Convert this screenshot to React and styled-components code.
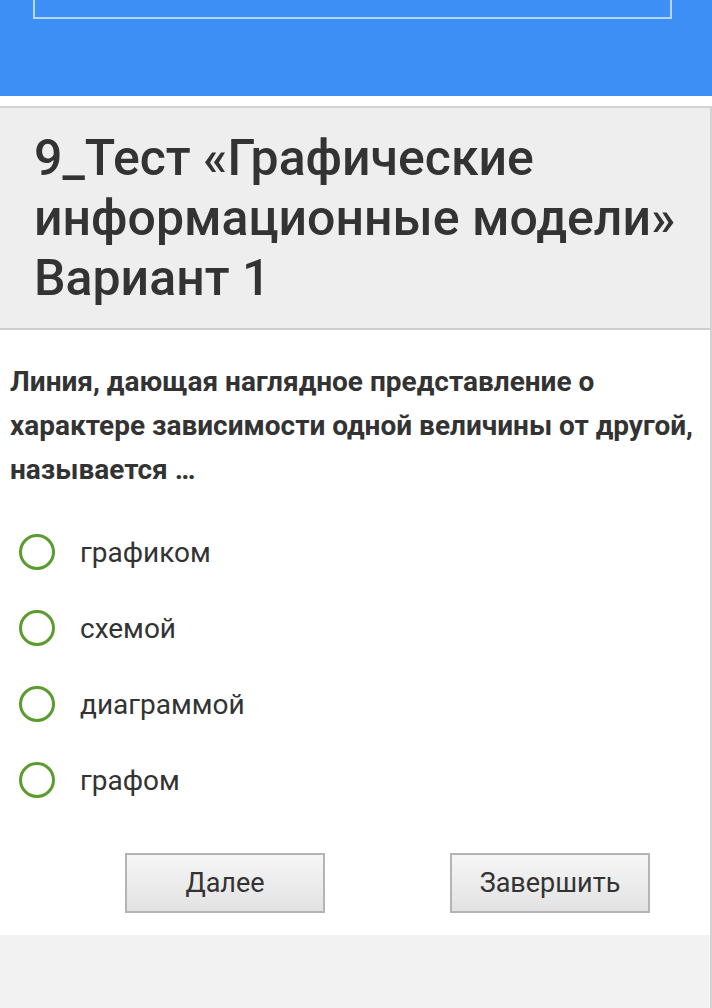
import React from 'react'
import styled, { createGlobalStyle } from 'styled-components'

const GlobalStyle = createGlobalStyle`
  html, body {
    margin: 0;
    padding: 0;
    background: #ffffff;
  }
  body {
    font-family: Roboto, "Liberation Sans", Arial, sans-serif;
    color: #333333;
  }
  * {
    box-sizing: border-box;
  }
`

const Page = styled.div`
  width: 712px;
  min-height: 1008px;
  display: flex;
  flex-direction: column;
`

const Header = styled.header`
  height: 96px;
  background: #3d8ef5;
  padding: 0 40px 0 33px;
`

const SearchBox = styled.div`
  height: 19px;
  border: 2px solid #b6d5fb;
  border-top: none;
`

const Main = styled.main`
  flex: 1;
  margin-top: 10px;
  display: flex;
  flex-direction: column;
  border-right: 2px solid #d2d2d2;
`

const TitlePanel = styled.section`
  background: #eeeeee;
  border-top: 2px solid #d3d3d3;
  border-bottom: 2px solid #cfcfcf;
  padding: 20px 0 20px 34px;
`

const Title = styled.h1`
  margin: 0;
  font-size: 50px;
  line-height: 60px;
  font-weight: 500;
  color: #333333;
`

const Content = styled.section`
  background: #ffffff;
  padding: 30px 0 22px 10px;
`

const Question = styled.p`
  margin: 0 0 22px;
  font-size: 28px;
  line-height: 44px;
  font-weight: 700;
  color: #333333;
`

const Options = styled.div`
  display: flex;
  flex-direction: column;
`

const Option = styled.label`
  height: 76px;
  display: flex;
  align-items: center;
  gap: 25px;
  padding-left: 9px;
  font-size: 28px;
  color: #333333;
  cursor: pointer;
`

const Radio = styled.span`
  width: 36px;
  height: 36px;
  border-radius: 50%;
  border: 3.5px solid #5c9b2e;
  flex-shrink: 0;
`

const Actions = styled.div`
  display: flex;
  gap: 125px;
  padding-left: 115px;
  margin-top: 35px;
`

const Button = styled.button`
  width: 200px;
  height: 60px;
  border: 2px solid #b4b4b4;
  background: linear-gradient(#f6f6f6, #e2e2e2);
  font-family: Roboto, "Liberation Sans", Arial, sans-serif;
  font-size: 27px;
  color: #333333;
  padding: 0;
  cursor: pointer;
`

const Footer = styled.div`
  flex: 1;
  background: #f2f2f2;
`

const answers = ['графиком', 'схемой', 'диаграммой', 'графом']

export default function App() {
  return (
    <Page>
      <GlobalStyle />
      <Header>
        <SearchBox />
      </Header>
      <Main>
        <TitlePanel>
          <Title>
            9_Тест «Графические
            <br />
            информационные модели»
            <br />
            Вариант 1
          </Title>
        </TitlePanel>
        <Content>
          <Question>
            Линия, дающая наглядное представление о характере зависимости одной величины от другой, называется …
          </Question>
          <Options>
            {answers.map((a) => (
              <Option key={a}>
                <Radio />
                {a}
              </Option>
            ))}
          </Options>
          <Actions>
            <Button>Далее</Button>
            <Button>Завершить</Button>
          </Actions>
        </Content>
        <Footer />
      </Main>
    </Page>
  )
}
